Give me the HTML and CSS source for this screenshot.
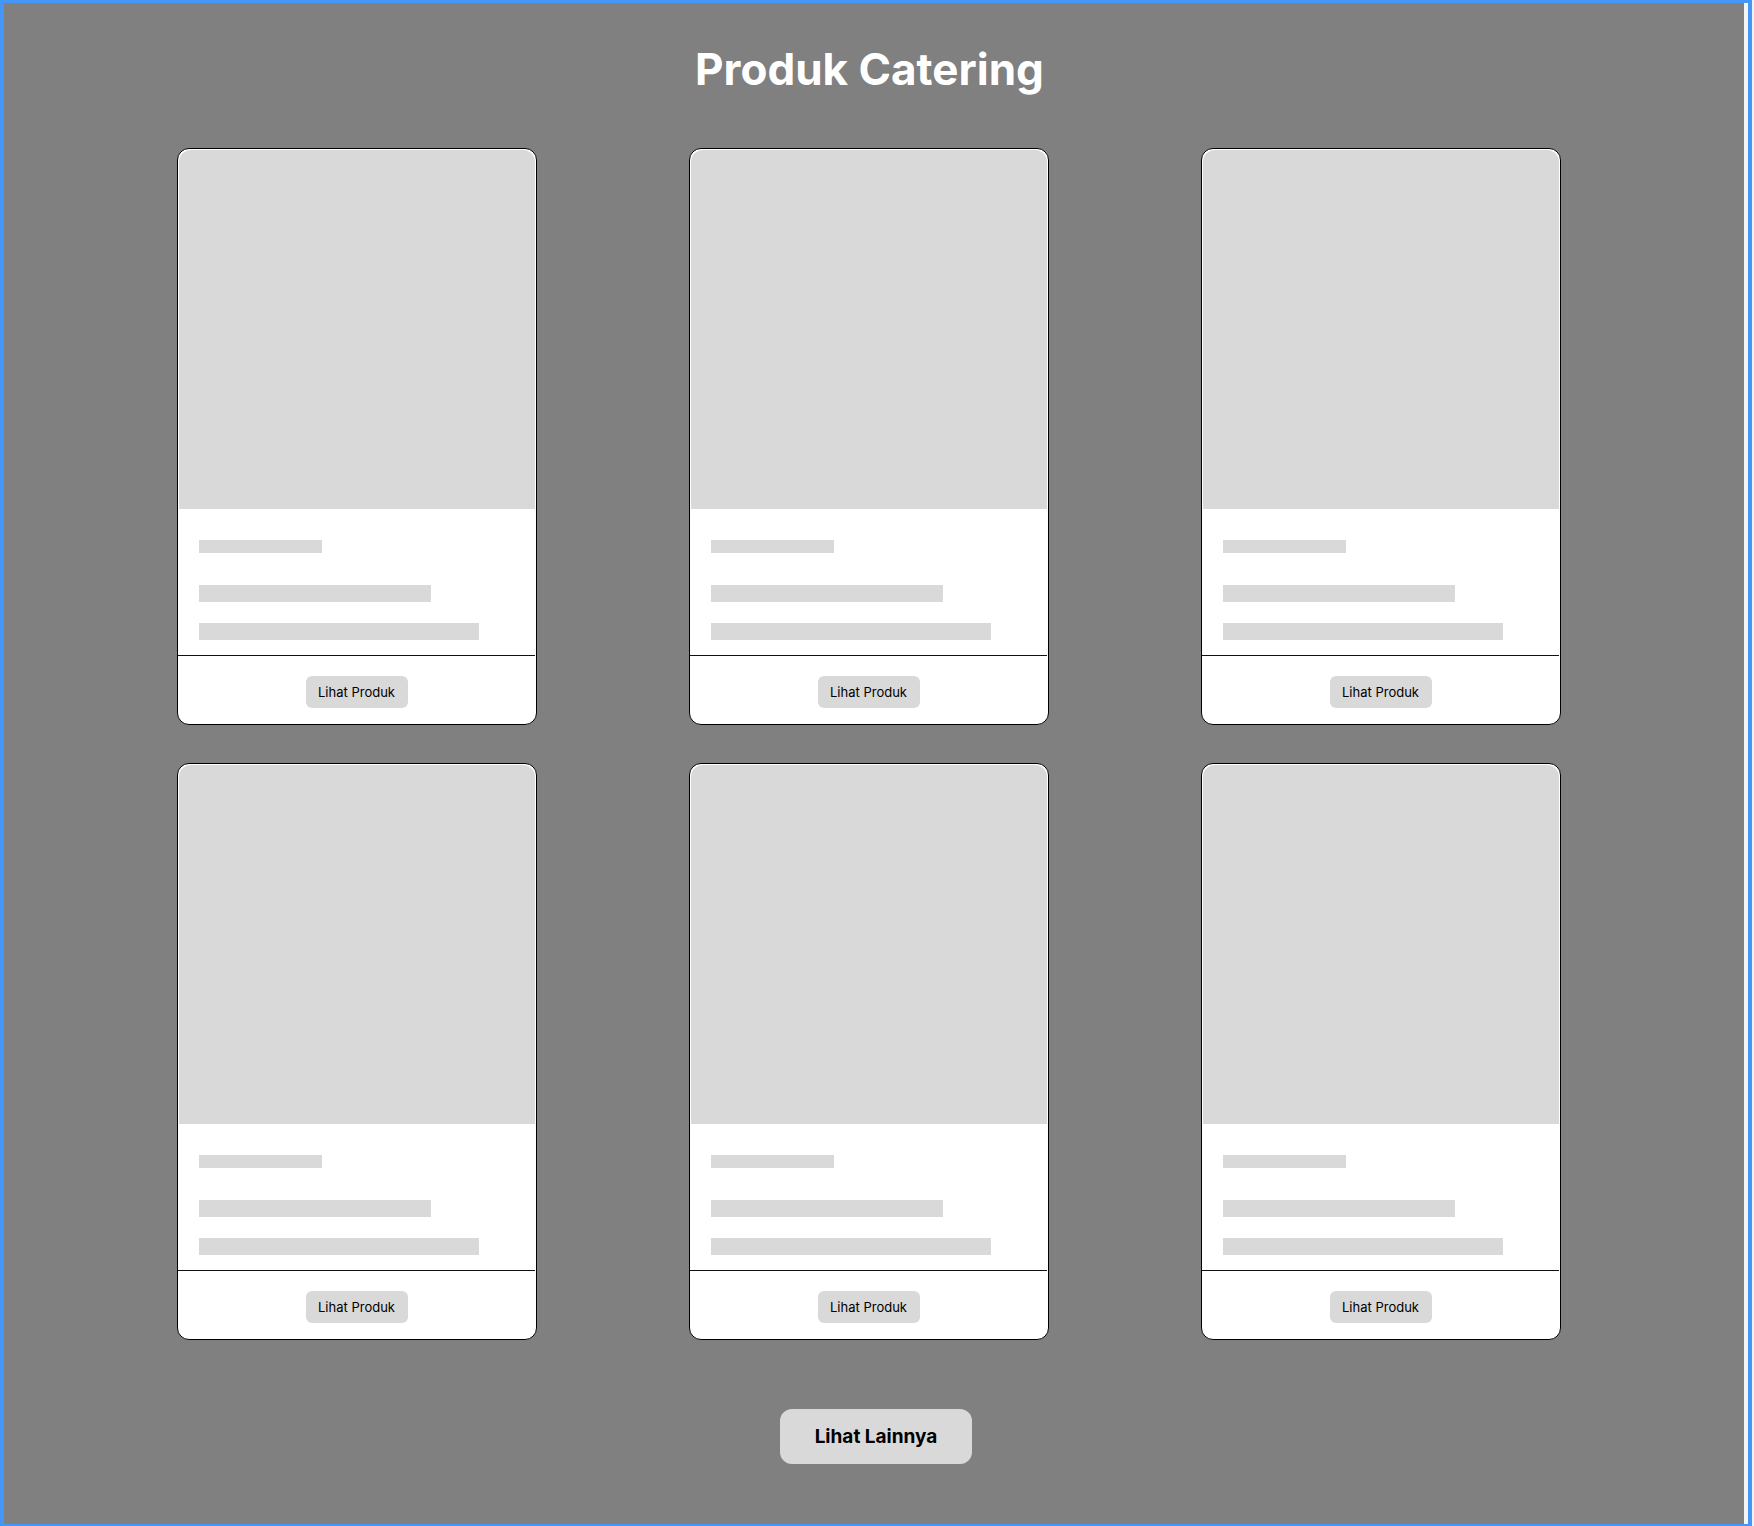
FILE: index.html
```html
<!DOCTYPE html>
<html lang="id">
<head>
<meta charset="utf-8">
<meta name="viewport" content="width=device-width, initial-scale=1">
<title>Produk Catering</title>
<link rel="stylesheet" href="styles.css">
</head>
<body>
<div class="frame">
  <main class="catalog">
    <h1 class="catalog-title">Produk Catering</h1>
    <div class="product-grid">
      <article class="card">
        <div class="card-image"></div>
        <div class="card-body"><div class="line line-short"></div><div class="line line-medium"></div><div class="line line-long"></div></div>
        <div class="card-footer"><button class="card-button" type="button">Lihat Produk</button></div>
      </article>
      <article class="card">
        <div class="card-image"></div>
        <div class="card-body"><div class="line line-short"></div><div class="line line-medium"></div><div class="line line-long"></div></div>
        <div class="card-footer"><button class="card-button" type="button">Lihat Produk</button></div>
      </article>
      <article class="card">
        <div class="card-image"></div>
        <div class="card-body"><div class="line line-short"></div><div class="line line-medium"></div><div class="line line-long"></div></div>
        <div class="card-footer"><button class="card-button" type="button">Lihat Produk</button></div>
      </article>
      <article class="card">
        <div class="card-image"></div>
        <div class="card-body"><div class="line line-short"></div><div class="line line-medium"></div><div class="line line-long"></div></div>
        <div class="card-footer"><button class="card-button" type="button">Lihat Produk</button></div>
      </article>
      <article class="card">
        <div class="card-image"></div>
        <div class="card-body"><div class="line line-short"></div><div class="line line-medium"></div><div class="line line-long"></div></div>
        <div class="card-footer"><button class="card-button" type="button">Lihat Produk</button></div>
      </article>
      <article class="card">
        <div class="card-image"></div>
        <div class="card-body"><div class="line line-short"></div><div class="line line-medium"></div><div class="line line-long"></div></div>
        <div class="card-footer"><button class="card-button" type="button">Lihat Produk</button></div>
      </article>
    </div>
    <div class="catalog-more"><button class="more-button" type="button">Lihat Lainnya</button></div>
  </main>
</div>
</body>
</html>
```
FILE: styles.css
```css
* {
  box-sizing: border-box;
}

body {
  margin: 0;
  padding-right: 2px;
  background: #f0f2f7;
  font-family: Inter, "Liberation Sans", sans-serif;
}

.frame {
  padding-right: 4px;
  border: solid #4497f7;
  border-width: 3px 4px 2px;
  background: #f5f5f5;
}

.catalog {
  padding: 39px 0 60px;
  background: #808080;
}

.catalog-title {
  margin: 0 9px 52px 0;
  color: #fff;
  font-size: 44px;
  font-weight: 700;
  line-height: 54px;
  text-align: center;
}

.product-grid {
  display: grid;
  grid-template-columns: repeat(auto-fit, 360px);
  justify-content: space-between;
  gap: 38px 120px;
  padding: 0 183px 0 173px;
}

.card {
  overflow: hidden;
  padding: 1px 1px 0;
  border: 1px solid #000;
  border-radius: 12px;
  background: #fff;
}

.card-image {
  height: 359px;
  border-radius: 12px 12px 0 0;
  background: #d9d9d9;
}

.card-body {
  display: flex;
  flex-direction: column;
  height: 146px;
  padding: 31px 20px 0;
}

.line {
  height: 17px;
  background: #d9d9d9;
}

.line-short {
  width: 123px;
  height: 13px;
}

.line-medium {
  width: 232px;
  margin-top: 32px;
}

.line-long {
  width: 280px;
  margin-top: 21px;
}

.card-footer {
  display: flex;
  justify-content: center;
  margin-left: -1px;
  padding: 20px 0 16px;
  border-top: 1px solid #111;
}

.card-button,
.more-button {
  padding: 0;
  border: 0;
  background: #d9d9d9;
  color: #000;
  font-family: inherit;
  cursor: pointer;
}

.card-button {
  width: 102px;
  height: 32px;
  border-radius: 6px;
  font-size: 13px;
}

.catalog-more {
  display: flex;
  justify-content: center;
  margin-top: 69px;
  padding-left: 4px;
}

.more-button {
  width: 192px;
  height: 55px;
  border-radius: 12px;
  font-size: 19px;
  font-weight: 700;
}
```
